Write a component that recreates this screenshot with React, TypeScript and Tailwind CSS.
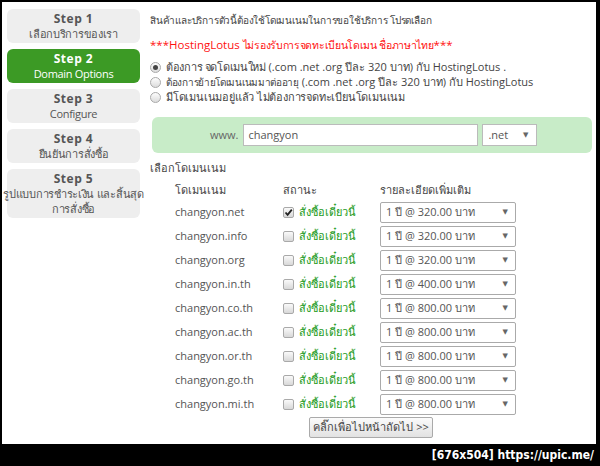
import React from 'react';

const font = { fontFamily: '"Open Sans", "Noto Sans", "DejaVu Sans", sans-serif' };

const steps = [
  { title: 'Step 1', sub: ['เลือกบริการของเรา'] },
  { title: 'Step 2', sub: ['Domain Options'], active: true },
  { title: 'Step 3', sub: ['Configure'] },
  { title: 'Step 4', sub: ['ยืนยันการสั่งซื้อ'] },
  { title: 'Step 5', sub: ['รูปแบบการชำระเงิน และสิ้นสุด', 'การสั่งซื้อ'] },
];

const rows = [
  { name: 'changyon.net', price: '320.00', checked: true },
  { name: 'changyon.info', price: '320.00' },
  { name: 'changyon.org', price: '320.00' },
  { name: 'changyon.in.th', price: '400.00' },
  { name: 'changyon.co.th', price: '800.00' },
  { name: 'changyon.ac.th', price: '800.00' },
  { name: 'changyon.or.th', price: '800.00' },
  { name: 'changyon.go.th', price: '800.00' },
  { name: 'changyon.mi.th', price: '800.00' },
];

function Radio({ on }: { on?: boolean }) {
  return (
    <span className="mr-[5px] flex h-[11px] w-[11px] shrink-0 items-center justify-center rounded-full border border-[#a9a9a9] bg-gradient-to-b from-[#fdfdfd] to-[#dcdcdc]">
      {on && <span className="h-[5px] w-[5px] rounded-full bg-[#444]" />}
    </span>
  );
}

function Check({ on }: { on?: boolean }) {
  return (
    <span className="flex h-[11px] w-[11px] shrink-0 items-center justify-center rounded-[2px] border border-[#a9a9a9] bg-gradient-to-b from-[#fafafa] to-[#d8d8d8]">
      {on && (
        <svg width="9" height="9" viewBox="0 0 9 9">
          <path d="M1.5 4.5 L3.6 6.8 L7.8 1.6" fill="none" stroke="#222" strokeWidth="1.8" />
        </svg>
      )}
    </span>
  );
}

function Select({ text, w }: { text: string; w: string }) {
  return (
    <div className={`flex h-[21px] items-center justify-between rounded-[2px] border border-[#aaa] bg-white pl-[5px] pr-[7px] text-[11px] text-[#555] ${w}`}>
      <span>{text}</span>
      <span className="text-[7px] text-[#666]">▼</span>
    </div>
  );
}

export default function App() {
  return (
    <div className="flex h-[466px] w-[600px] flex-col bg-black" style={font}>
      <div className="ml-[2px] mr-[4px] mt-[2px] flex h-[442px] bg-white">
        <div className="flex w-[141px] shrink-0 flex-col gap-[6px] pl-[5px] pr-[3px] pt-[7px]">
          {steps.map((s) => (
            <div
              key={s.title}
              className={`flex flex-col items-center justify-center rounded-[6px] text-center ${
                s.sub.length > 1 ? 'h-[49px]' : 'h-[34px]'
              } ${s.active ? 'bg-[#3c9a25] text-white' : 'bg-[#eeeeee] text-[#555]'}`}
            >
              <div className="text-[12px] font-bold leading-[15px] tracking-[0.5px]">{s.title}</div>
              {s.sub.map((l) => (
                <div key={l} className="whitespace-nowrap text-[11px] leading-[15px] tracking-[-0.3px]">
                  {l}
                </div>
              ))}
            </div>
          ))}
        </div>

        <div className="flex flex-1 flex-col pl-[7px] pr-[4px] text-[11px] text-[#444]">
          <div className="mt-[9px] text-[10px] leading-[18px] tracking-[-0.2px]">
            สินค้าและบริการตัวนี้ต้องใช้โดเมนเนมในการขอใช้บริการ โปรดเลือก
          </div>
          <div className="mt-[7px] text-[11.5px] leading-[18px] text-[#ff1010]">
            ***HostingLotus <span className="text-[10.5px] tracking-[-0.3px]">ไม่รองรับการจดทะเบียนโดเมน ชื่อภาษาไทย</span>***
          </div>
          <div className="mt-[6px] flex flex-col">
            <div className="flex h-[15px] items-center">
              <Radio on />
              <span>
                <span className="tracking-[-0.3px]">ต้องการ จดโดเมนใหม่</span> (.com .net .org ปีละ 320 บาท) กับ HostingLotus .
              </span>
            </div>
            <div className="flex h-[15px] items-center">
              <Radio />
              <span>
                <span className="text-[10px] tracking-[-0.3px]">ต้องการย้ายโดเมนเนมมาต่ออายุ</span> (.com .net .org ปีละ 320 บาท) กับ HostingLotus
              </span>
            </div>
            <div className="flex h-[15px] items-center">
              <Radio />
              <span className="tracking-[-0.2px]">มีโดเมนเนมอยู่แล้ว ไม่ต้องการจดทะเบียนโดเมนเนม</span>
            </div>
          </div>

          <div className="ml-[2px] mt-[12px] flex h-[36px] items-center rounded-[6px] bg-[#c8ecc8] pl-[58px]">
            <span className="mr-[5px] text-[#666]">www.</span>
            <div className="flex h-[22px] w-[235px] items-center border border-[#bbb] bg-white px-[4px] text-[#555]">changyon</div>
            <div className="ml-[4px] flex h-[22px] w-[55px] items-center justify-between border border-[#bbb] bg-white pl-[5px] pr-[8px] text-[#555]">
              <span>.net</span>
              <span className="text-[7px] text-[#666]">▼</span>
            </div>
          </div>

          <div className="mt-[6px] leading-[18px]">เลือกโดเมนเนม</div>

          <div className="mt-[4px] flex h-[18px] items-center">
            <span className="w-[133px] pl-[25px]">โดเมนเนม</span>
            <span className="w-[97px]">สถานะ</span>
            <span>รายละเอียดเพิ่มเติม</span>
          </div>

          <div className="mt-[1px] flex flex-col">
            {rows.map((r) => (
              <div key={r.name} className="flex h-[24px] items-center">
                <span className="w-[133px] pl-[25px] text-[#555]">{r.name}</span>
                <span className="flex w-[97px] items-center gap-[5px]">
                  <Check on={r.checked} />
                  <span className="text-[#1a9a1a]">สั่งซื้อเดี๋ยวนี้</span>
                </span>
                <Select text={`1 ปี @ ${r.price} บาท`} w="w-[136px]" />
              </div>
            ))}
          </div>

          <div className="mt-[1px] flex justify-center">
            <button className="h-[21px] rounded-[2px] border border-[#aaa] bg-gradient-to-b from-[#fbfbfb] to-[#e2e2e2] px-[3px] text-[11px] text-[#444]">
              คลิ๊กเพื่อไปหน้าถัดไป &gt;&gt;
            </button>
          </div>
        </div>
      </div>
      <div
        className="flex flex-1 items-center justify-end pr-[6px] text-[12px] font-bold text-white"
        style={{ fontFamily: '"DejaVu Sans Condensed", "DejaVu Sans", sans-serif' }}
      >
        [676x504] https://upic.me/
      </div>
    </div>
  );
}
